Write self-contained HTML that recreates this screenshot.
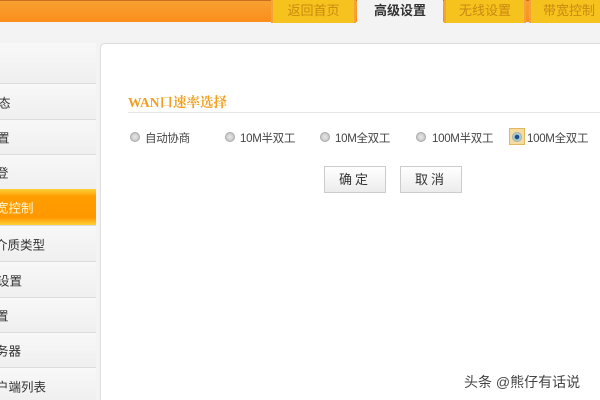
<!DOCTYPE html>
<html><head><meta charset="utf-8"><style>
*{margin:0;padding:0;box-sizing:border-box}
html,body{width:600px;height:400px;overflow:hidden}
body{background:#f3f3f3;font-family:"Liberation Sans","Noto Sans CJK SC",sans-serif;position:relative}
.bar{position:absolute;left:0;top:0;width:600px;height:22px;background:linear-gradient(#f7a030,#fb8e1c);border-top:1px solid #c87020}
.tab{position:absolute;top:0;height:23px;background:#f6c21e;border-left:2px solid #f3a33a;border-right:2px solid #f3a33a;color:#c98a10;font-size:13px;text-align:center;line-height:21px}
.tab.on{background:#f3f3f3;color:#333;border-color:#f3f3f3;height:25px}
.side{position:absolute;left:-6px;top:43px;width:102px;height:360px;background:#f2f2f2;border:1px solid #ddd;border-radius:4px}
.row{position:absolute;left:0;width:96px;border-top:1px solid #dcdcdc;font-size:12.5px;color:#333;background:linear-gradient(#f8f8f8,#efefef)}
.row span{position:absolute;top:50%;transform:translateY(-50%);white-space:nowrap}
.act{background:linear-gradient(#ffd23a,#ff9d00 20%,#ff9800 80%,#ffd23a);color:#fff7d0;border-top:none}
.main{position:absolute;left:100px;top:43px;width:510px;height:370px;background:#fff;border:1px solid #ddd;border-radius:5px}
.title{position:absolute;left:128px;top:91px;color:#f0a020;font-size:13.5px;font-family:"Liberation Serif","Noto Serif CJK SC",serif;font-weight:bold}
.line{position:absolute;left:128px;top:112px;width:472px;height:1px;background:#e6e6e6}
.r{position:absolute;top:132px;width:10px;height:10px;border-radius:50%;background:radial-gradient(#e8e8e8,#bbb);border:1px solid #aaa}
.rt{position:absolute;top:130px;font-size:11.5px;color:#444;letter-spacing:-0.3px}
.btn{position:absolute;top:166px;height:27px;width:62px;border:1px solid #ccc;background:linear-gradient(#fff,#ececec);font-size:13px;color:#333;text-align:center;line-height:25px;letter-spacing:3px}
.wm{position:absolute;left:464px;top:372px;font-size:14px;color:#444}
</style></head><body>
<div class="bar"></div>
<div class="tab" style="left:271px;width:85px">返回首页</div>
<div class="tab on" style="left:357px;width:86px;font-weight:bold">高级设置</div>
<div class="tab" style="left:444px;width:82px">无线设置</div>
<div class="tab" style="left:529px;width:80px;text-align:left;padding-left:12px">带宽控制</div>
<div class="side"></div>
<div class="row" style="top:43px;height:40px;border-top:none"></div>
<div class="row" style="top:83px;height:36px"><span style="left:-2px">态</span></div>
<div class="row" style="top:119px;height:35px"><span style="left:-3px">置</span></div>
<div class="row" style="top:154px;height:35px"><span style="left:-4px">登</span></div>
<div class="row act" style="top:189px;height:36px"><span style="left:-4px">宽控制</span></div>
<div class="row" style="top:225px;height:36px"><span style="left:-5px">介质类型</span></div>
<div class="row" style="top:261px;height:36px"><span style="left:-3px">设置</span></div>
<div class="row" style="top:297px;height:35px"><span style="left:-4px">置</span></div>
<div class="row" style="top:332px;height:35px"><span style="left:-4px">务器</span></div>
<div class="row" style="top:367px;height:36px"><span style="left:-4px">户端列表</span></div>
<div class="main"></div>
<div class="title">WAN口速率选择</div>
<div class="line"></div>
<div class="r" style="left:130px"></div><div class="rt" style="left:145px">自动协商</div>
<div class="r" style="left:225px"></div><div class="rt" style="left:240px">10M半双工</div>
<div class="r" style="left:320px"></div><div class="rt" style="left:335px">10M全双工</div>
<div class="r" style="left:416px"></div><div class="rt" style="left:432px">100M半双工</div>
<div style="position:absolute;left:509px;top:128px;width:16px;height:17px;background:#f5dca0;border:1px solid #e0b860"></div>
<div class="r" style="left:512px;background:radial-gradient(#1a4a90 35%,#9cc 45%,#ddd)"></div><div class="rt" style="left:527px">100M全双工</div>
<div class="btn" style="left:324px">确定</div>
<div class="btn" style="left:400px">取消</div>
<div class="wm">头条 @熊仔有话说</div>
</body></html>
